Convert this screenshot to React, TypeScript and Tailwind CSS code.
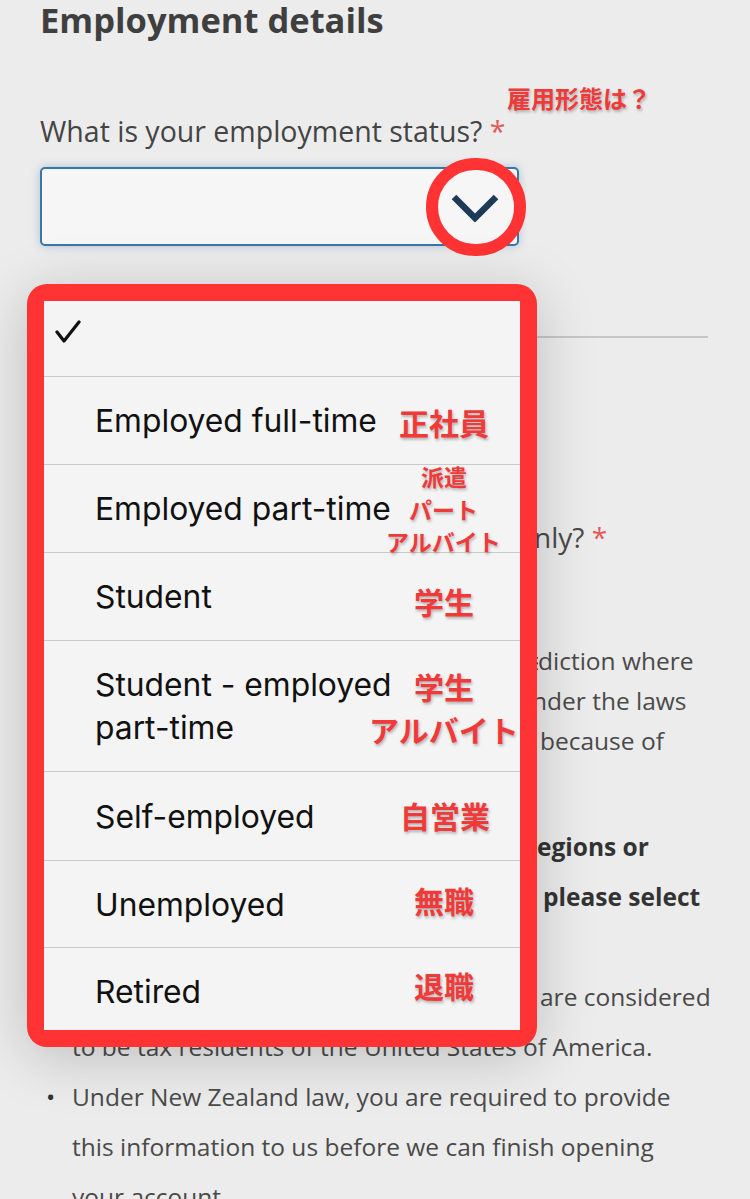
import React from "react";

const jp = { fontFamily: '"Noto Sans CJK JP", "Noto Sans", sans-serif' };

function Note({ text, left, top, size }: { text: string; left: number; top: number; size: number }) {
  return (
    <div
      className="absolute whitespace-nowrap font-bold leading-none text-[#f03a3a] [text-shadow:1px_2px_3px_rgba(0,0,0,0.28)]"
      style={{ ...jp, left, top, fontSize: size }}
    >
      {text}
    </div>
  );
}

function BgLine({
  prefix,
  suffix,
  prefixWidth,
  bold,
  lead,
  star,
}: {
  prefix: string;
  suffix: string;
  prefixWidth: number;
  bold?: boolean;
  lead: string;
  star?: boolean;
}) {
  return (
    <div className={`flex whitespace-nowrap ${lead} ${bold ? "font-bold text-[#333]" : "text-[#4a4a4a]"}`}>
      <span className="shrink-0 overflow-hidden" style={{ width: prefixWidth }}>
        {prefix}
      </span>
      <span>
        {suffix}
        {star && <span className="text-[#e25a5a]"> *</span>}
      </span>
    </div>
  );
}

const rows: { label: string[]; h: string }[] = [
  { label: ["Employed full-time"], h: "h-[88px]" },
  { label: ["Employed part-time"], h: "h-[88px]" },
  { label: ["Student"], h: "h-[88px]" },
  { label: ["Student - employed", "part-time"], h: "h-[131px]" },
  { label: ["Self-employed"], h: "h-[89px]" },
  { label: ["Unemployed"], h: "h-[87px]" },
  { label: ["Retired"], h: "h-[88px]" },
];

export default function App() {
  return (
    <div
      className="relative h-[1199px] w-[750px] overflow-hidden bg-[#ececec]"
      style={{ fontFamily: '"Open Sans", "Noto Sans", sans-serif' }}
    >
      <div className="pl-[40px]">
        <h1 className="text-[34.5px] font-bold leading-[40px] text-[#3f3f3f]">Employment details</h1>

        <div className="mt-[73px] text-[28.5px] leading-[36px] text-[#444]">
          What is your employment status?<span className="text-[#e25a5a]"> *</span>
        </div>

        <div className="mt-[18px] flex h-[79px] w-[479px] items-center justify-end rounded-[5px] border-2 border-[#3a76a6] bg-[#f6f6f6] pr-[17px] shadow-[0_0_10px_rgba(58,118,166,0.35)]">
          <svg width="50" height="30" viewBox="0 0 50 30">
            <polyline points="4,5 25,26 46,5" fill="none" stroke="#1d3b57" strokeWidth="6.5" strokeLinejoin="miter" />
          </svg>
        </div>

        <div className="mt-[90px] h-[2px] w-[668px] bg-[#c6c6c6]" />

        <div className="mt-[181px] text-[28px]">
          <BgLine
            prefix="Are you a tax resident of New Zealand o"
            suffix="nly?"
            prefixWidth={494}
            lead="leading-[36px]"
            star
          />
        </div>

        <div className="mt-[86px] text-[24.5px]">
          <BgLine prefix="A tax resident is a person who lives in a juris" suffix="diction where" prefixWidth={498} lead="leading-[40px]" />
          <BgLine prefix="they are liable to pay income tax u" suffix="nder the laws" prefixWidth={492} lead="leading-[40px]" />
          <BgLine prefix="of that jurisdiction, for example, " suffix="because of" prefixWidth={500} lead="leading-[40px]" />
        </div>

        <div className="mt-[61px] text-[24.5px]">
          <BgLine prefix="If you are a tax resident in other r" suffix="egions or" prefixWidth={497} bold lead="leading-[50px]" />
          <BgLine prefix="countries in addition to New Zealand, " suffix="please select" prefixWidth={503} bold lead="leading-[50px]" />
          <BgLine prefix="yes." suffix="" prefixWidth={300} bold lead="leading-[50px]" />
        </div>

        <ul className="text-[24.5px] text-[#4a4a4a]">
          <li className="flex">
            <span className="w-[32px] shrink-0 pl-[6px] leading-[50px] text-[#333]">•</span>
            <div>
              <BgLine prefix="US citizens and green card holders " suffix="are considered" prefixWidth={468} lead="leading-[50px]" />
              <div className="leading-[50px] whitespace-nowrap">to be tax residents of the United States of America.</div>
            </div>
          </li>
          <li className="flex">
            <span className="w-[32px] shrink-0 pl-[6px] leading-[50px] text-[#333]">•</span>
            <div className="leading-[50px]">
              <div className="whitespace-nowrap">Under New Zealand law, you are required to provide</div>
              <div className="whitespace-nowrap">this information to us before we can finish opening</div>
              <div className="whitespace-nowrap">your account.</div>
            </div>
          </li>
        </ul>
      </div>

      <Note text="雇用形態は？" left={507} top={86} size={24} />

      {/* red circle highlighting chevron */}
      <div className="absolute left-[426px] top-[158px] h-[98px] w-[100px] rounded-full border-[12px] border-[#ff3333]" />

      {/* dropdown popup */}
      <div className="absolute left-[27px] top-[284px] h-[763px] w-[510px] rounded-[20px] bg-[#ff3333] p-[17px] shadow-[0_10px_60px_rgba(0,0,0,0.2)]">
        <div className="h-full w-full overflow-hidden bg-[#f4f4f4]" style={{ fontFamily: 'Inter, "Noto Sans", sans-serif' }}>
          <div className="-mt-[13px]">
            <div className="flex h-[88px] items-center pl-[11px]">
              <svg width="26" height="24" viewBox="0 0 26 24">
                <polyline points="2,12 9,21 24,2" fill="none" stroke="#111" strokeWidth="3.2" strokeLinecap="round" strokeLinejoin="round" />
              </svg>
            </div>
            {rows.map((r, i) => (
              <div key={i} className={`flex ${r.h} items-center border-t border-[#c9c9c9] pl-[51px]`}>
                <div className="text-[31.8px] leading-[43px] text-[#111]">
                  {r.label.map((l, j) => (
                    <div key={j}>{l}</div>
                  ))}
                </div>
              </div>
            ))}
          </div>
        </div>
      </div>

      <Note text="正社員" left={399} top={407} size={30} />
      <Note text="派遣" left={421} top={465} size={23} />
      <Note text="パート" left={409} top={498} size={23} />
      <Note text="アルバイト" left={386} top={530} size={23} />
      <Note text="学生" left={414} top={586} size={30} />
      <Note text="学生" left={414} top={671} size={30} />
      <Note text="アルバイト" left={369} top={714} size={30} />
      <Note text="自営業" left={400} top={800} size={30} />
      <Note text="無職" left={414} top={885} size={30} />
      <Note text="退職" left={414} top={970} size={30} />
    </div>
  );
}
